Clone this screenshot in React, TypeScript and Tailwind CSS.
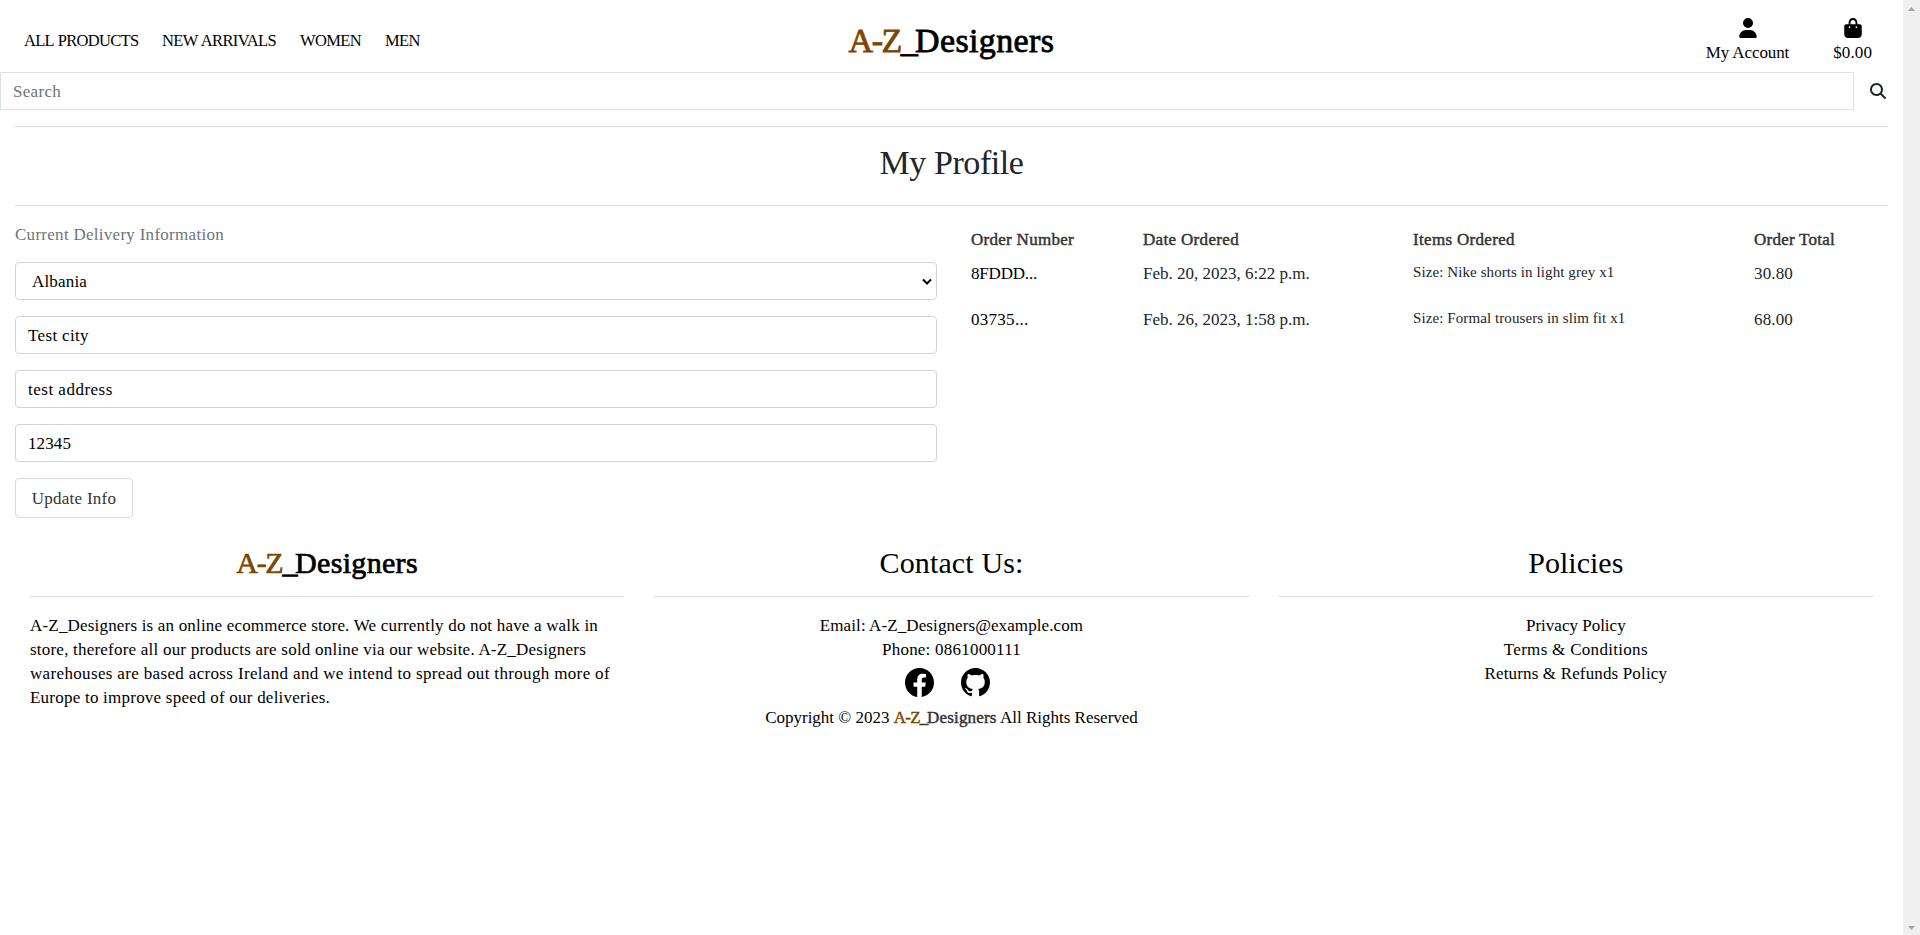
import type { ReactNode } from 'react';
import { FaUser, FaBagShopping, FaMagnifyingGlass } from 'react-icons/fa6';
import { BsFacebook, BsGithub } from 'react-icons/bs';

function Rule({ className = '' }: { className?: string }) {
  return <hr className={`h-px border-0 bg-[#dadbdc] ${className}`} />;
}

function Brand({ className }: { className: string }) {
  return (
    <span className={`whitespace-nowrap ${className}`}>
      <span className="tracking-[-0.044em] text-[#7d4600]">A-Z</span>
      <span className="tracking-[-0.08em]">_</span>
      <span className="tracking-[0.011em]">Designers</span>
    </span>
  );
}

function Field({ value, className }: { value: string; className: string }) {
  return (
    <input
      defaultValue={value}
      className={`mb-4 block h-[38px] w-full rounded border border-[#ced4da] bg-white px-3 pt-[2px] text-[17px] text-black outline-none ${className}`}
    />
  );
}

function Header() {
  return (
    <header className="text-black">
      <div className="grid h-[72px] grid-cols-[1fr_auto_1fr]">
        <nav className="flex items-start pt-[29px] pl-6 text-[16.5px] leading-6 whitespace-nowrap">
          <a className="w-[138px] tracking-[-0.7px] [word-spacing:1px]">ALL PRODUCTS</a>
          <a className="w-[138px] tracking-[-0.66px] [word-spacing:1px]">NEW ARRIVALS</a>
          <a className="w-[85px] tracking-[-0.65px]">WOMEN</a>
          <a className="tracking-[-0.6px]">MEN</a>
        </nav>
        <Brand className="pt-[22px] text-[34px] leading-[38px] [-webkit-text-stroke:0.8px]" />
        <div className="flex items-start justify-end pr-[31px] text-[17px] leading-6 whitespace-nowrap">
          <a className="mr-[44px] flex flex-col items-center pt-[18px]">
            <FaUser className="mb-[3px] ml-px h-5 w-[18px]" />
            <span className="tracking-[-0.1px]">My Account</span>
          </a>
          <a className="flex flex-col items-center pt-[18px]">
            <FaBagShopping className="mb-[3px] h-5 w-[18px]" />
            <span className="tracking-[0.1px]">$0.00</span>
          </a>
        </div>
      </div>
      <div className="flex h-[38px]">
        <input
          placeholder="Search"
          className="h-[38px] w-[1854px] border border-[#dee2e6] bg-white px-3 pt-[2px] text-[17px] tracking-[0.3px] outline-none placeholder:text-[#6c757d]"
        />
        <button className="flex flex-1 items-center justify-center pr-[2px] text-[#212529]">
          <FaMagnifyingGlass className="size-4" />
        </button>
      </div>
    </header>
  );
}

function DeliveryForm() {
  return (
    <form className="w-[922px]">
      <p className="mb-[15px] pt-[1px] text-[17px] leading-6 tracking-[0.28px] text-[#6c757d]">Current Delivery Information</p>
      <div className="mb-4 flex h-[38px] items-center justify-between rounded border border-[#ced4da] pt-px pr-[3px] pl-4 text-[17px] tracking-[0.17px] text-black">
        <span>Albania</span>
        <svg viewBox="0 0 12 8" className="h-2 w-3" fill="none" stroke="#000" strokeWidth="2">
          <path d="M2 1.5 6 5.5 10 1.5" />
        </svg>
      </div>
      <Field value="Test city" className="tracking-[0.35px]" />
      <Field value="test address" className="tracking-[0.5px]" />
      <Field value="12345" className="tracking-[0.1px]" />
      <button
        type="button"
        className="h-10 w-[118px] rounded border border-[#dadada] bg-white pt-[2px] text-[17px] tracking-[0.26px] text-[#333]"
      >
        Update Info
      </button>
    </form>
  );
}

const orders = [
  { id: '8FDDD...', idClass: 'tracking-[-0.19px]', date: 'Feb. 20, 2023, 6:22 p.m.', item: 'Size: Nike shorts in light grey x1', total: '30.80' },
  { id: '03735...', idClass: 'tracking-[0.28px]', date: 'Feb. 26, 2023, 1:58 p.m.', item: 'Size: Formal trousers in slim fit x1', total: '68.00' },
];

function Orders() {
  return (
    <div className="ml-[34px] grid flex-1 grid-cols-[172px_270px_341px_auto] content-start pt-[6px] text-[17px] leading-6 whitespace-nowrap text-[#212529]">
      <div className="contents text-[#333] [-webkit-text-stroke:0.45px]">
        <span className="mb-[10px] tracking-[0.28px]">Order Number</span>
        <span className="tracking-[0.33px]">Date Ordered</span>
        <span className="tracking-[0.32px]">Items Ordered</span>
        <span className="tracking-[0.25px]">Order Total</span>
      </div>
      {orders.map((o) => (
        <div key={o.id} className="contents">
          <span className={`h-[46px] text-black ${o.idClass}`}>{o.id}</span>
          <span>{o.date}</span>
          <span className="text-[15px] leading-[21px] tracking-[0.09px]">{o.item}</span>
          <span className="tracking-[0.15px]">{o.total}</span>
        </div>
      ))}
    </div>
  );
}

function FooterColumn({ title, children }: { title: ReactNode; children: ReactNode }) {
  return (
    <section className="min-w-0 flex-1 text-center">
      <h3 className="text-[30px] leading-[34px]">{title}</h3>
      <Rule className="mt-4 mb-[17px]" />
      {children}
    </section>
  );
}

function Footer() {
  return (
    <footer className="flex gap-[30px] px-[30px] pt-[28px] text-[17px] leading-6 text-black">
      <FooterColumn title={<Brand className="[-webkit-text-stroke:0.7px]" />}>
        <div className="text-left whitespace-nowrap">
          <p className="tracking-[0.186px]">A-Z_Designers is an online ecommerce store. We currently do not have a walk in</p>
          <p className="tracking-[0.217px]">store, therefore all our products are sold online via our website. A-Z_Designers</p>
          <p className="tracking-[0.344px]">warehouses are based across Ireland and we intend to spread out through more of</p>
          <p className="tracking-[0.23px]">Europe to improve speed of our deliveries.</p>
        </div>
      </FooterColumn>
      <FooterColumn title={<span className="tracking-[0.13px]">Contact Us:</span>}>
        <p className="tracking-[0.1px]">Email: A-Z_Designers@example.com</p>
        <p className="tracking-[0.22px]">Phone: 0861000111</p>
        <div className="flex justify-center gap-[27px] pt-[6px] pr-[7px]">
          <BsFacebook className="size-[29px]" />
          <BsGithub className="size-[29px]" />
        </div>
        <p className="mt-[9px] whitespace-nowrap">
          Copyright © 2023{' '}
          <Brand className="text-[#333] [-webkit-text-stroke:0.45px]" /> All Rights Reserved
        </p>
      </FooterColumn>
      <FooterColumn title="Policies">
        <p>Privacy Policy</p>
        <p className="tracking-[0.3px]">Terms &amp; Conditions</p>
        <p className="tracking-[0.15px]">Returns &amp; Refunds Policy</p>
      </FooterColumn>
    </footer>
  );
}

function ScrollTrack() {
  return (
    <div className="flex w-[17px] flex-col items-center justify-between bg-[#f0f0f0] pt-[7px] pb-[5px]">
      <svg viewBox="0 0 7 4" className="h-1 w-[7px]" fill="#a3a3a3">
        <path d="M0 4 3.5 0 7 4z" />
      </svg>
      <svg viewBox="0 0 7 4" className="h-1 w-[7px]" fill="#a3a3a3">
        <path d="M0 0 3.5 4 7 0z" />
      </svg>
    </div>
  );
}

export default function App() {
  return (
    <div className="flex h-[935px] w-[1920px] overflow-hidden bg-white font-['Liberation_Serif',serif]">
      <div className="w-[1903px]">
        <Header />
        <main className="px-[15px] pt-4">
          <Rule />
          <h2 className="pt-[17px] text-center text-[34px] leading-[38px] tracking-[-0.43px] text-[#212529]">My Profile</h2>
          <Rule className="mt-[23px] mb-4" />
          <div className="flex">
            <DeliveryForm />
            <Orders />
          </div>
        </main>
        <Footer />
      </div>
      <ScrollTrack />
    </div>
  );
}
